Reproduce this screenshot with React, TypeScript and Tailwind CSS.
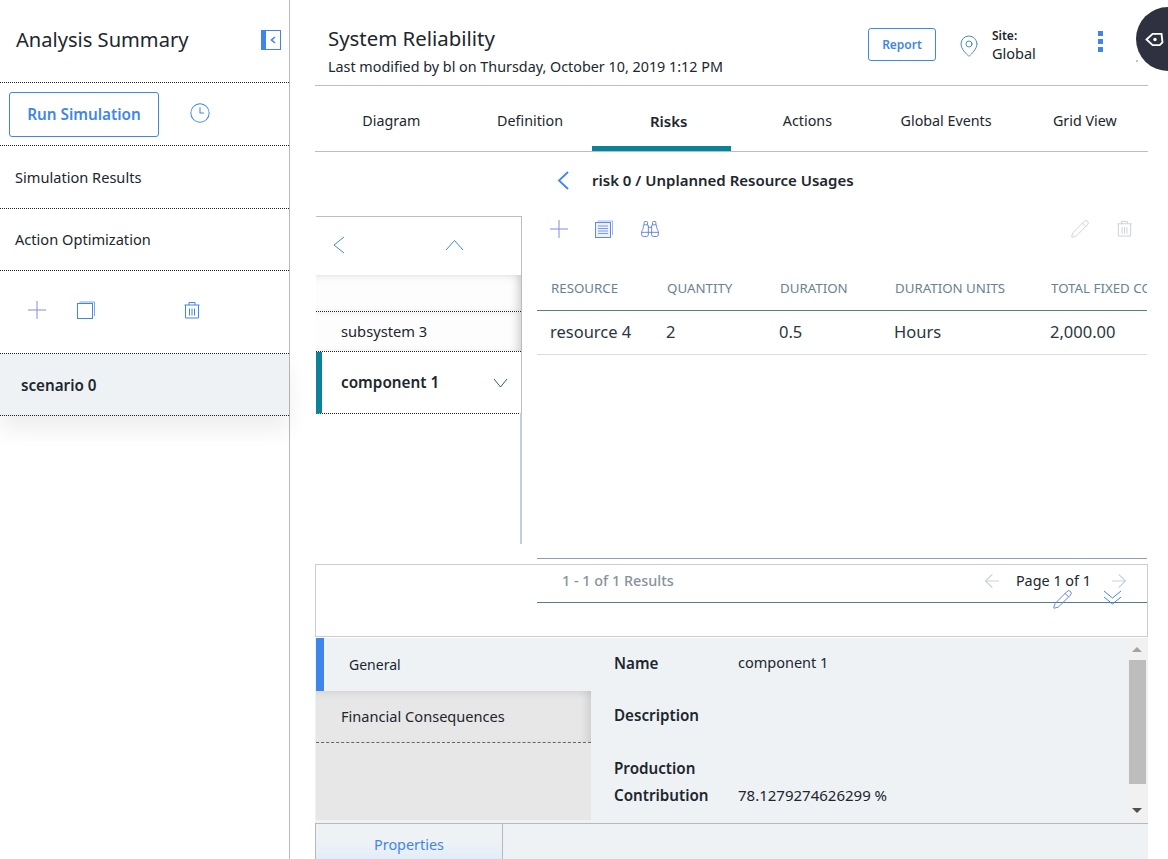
import { ArrowLeft, ArrowRight, Binoculars, Clock3, MapPin, Pencil } from "lucide-react";

const TABS = ["Diagram", "Definition", "Risks", "Actions", "Global Events", "Grid View"];

const COLUMNS = [
    { label: "RESOURCE", value: "resource 4", width: "w-[116px]" },
    { label: "QUANTITY", value: "2", width: "w-[113px]" },
    { label: "DURATION", value: "0.5", width: "w-[115px]" },
    { label: "DURATION UNITS", value: "Hours", width: "w-[156px]" },
    { label: "TOTAL FIXED COST", value: "2,000.00", width: "w-[110px]" },
];

function TrashIcon({ className }: { className?: string }) {
    return (
        <svg viewBox="0 0 18 18" fill="none" stroke="currentColor" strokeWidth="1" className={className}>
            <path d="M1.500 4h15M6 4V1.500h6V4M2.500 4v13h13V4M6.500 7.500v7M9 7.500v7M11.500 7.500v7" />
        </svg>
    );
}

function CopyIcon({ className }: { className?: string }) {
    return (
        <svg viewBox="0 0 18 18" fill="none" stroke="currentColor" strokeWidth="1" className={className}>
            <rect x="0.500" y="2.500" width="15" height="15" />
            <path d="M2.500 1h15v14" opacity="0.7" />
        </svg>
    );
}

function SheetIcon({ className }: { className?: string }) {
    return (
        <svg viewBox="0 0 18 18" fill="none" stroke="currentColor" strokeWidth="1" className={className}>
            <rect x="0.500" y="2.500" width="15" height="15" fill="#eef1fd" />
            <path d="M2.500 1h15v14" opacity="0.6" />
            <path d="M3 6h10M3 8.500h10M3 11h10M3 13.500h10" opacity="0.8" />
        </svg>
    );
}

function PlusIcon({ className }: { className?: string }) {
    return (
        <svg viewBox="0 0 18 18" fill="none" stroke="currentColor" strokeWidth="1" className={className}>
            <path d="M0 9h18M9 0v18" />
        </svg>
    );
}

function ChevronLine({ d, w, h, sw = 1, className }: { d: string; w: number; h: number; sw?: number; className?: string }) {
    return (
        <svg viewBox={`0 0 ${w} ${h}`} width={w} height={h} fill="none" stroke="currentColor" strokeWidth={sw} className={className}>
            <path d={d} />
        </svg>
    );
}

function SideRow({ children, tall }: { children: React.ReactNode; tall?: boolean }) {
    return (
        <div className={`${tall ? "h-[63px]" : "h-[62px]"} flex items-center pl-[15px] pt-[1px] text-[14.600px] border-b border-dotted border-[#222]`}>
            {children}
        </div>
    );
}

export default function App() {
    return (
        <div className="relative w-[1168px] h-[859px] overflow-hidden bg-white flex text-[#20262e] font-['Noto_Sans',sans-serif]">
            {/* Left summary column */}
            <aside className="w-[290px] shrink-0 border-r border-[#b8b8b8]">
                <div className="h-[83px] flex items-center justify-between pl-[16px] pr-[8px] border-b border-dotted border-[#222] pb-[2px]">
                    <h1 className="text-[20.100px] leading-none">Analysis Summary</h1>
                    <div className="w-[20px] h-[20px] mb-[1px] border border-[#3f86ea] border-l-[5px] flex items-center justify-center">
                        <ChevronLine d="M5 1 1.500 4 5 7" w={6} h={8} sw={1.600} className="text-[#3f86ea]" />
                    </div>
                </div>
                <div className="h-[63px] flex items-center pl-[9px] border-b border-dotted border-[#222]">
                    <button className="w-[150px] h-[45px] rounded-[3px] border border-[#3f86ea] text-[#3f86ea] text-[15.300px] font-semibold">
                        Run Simulation
                    </button>
                    <Clock3 className="ml-[30px] mb-[3px] w-[22px] h-[22px] text-[#3f86ea]" strokeWidth={1.100} />
                </div>
                <SideRow tall>Simulation Results</SideRow>
                <SideRow>Action Optimization</SideRow>
                <div className="h-[83px] flex items-center pl-[28px] pb-[4px] border-b border-dotted border-[#222]">
                    <PlusIcon className="w-[18px] h-[18px] text-[#7f8ce8]" />
                    <CopyIcon className="ml-[31px] w-[18px] h-[18px] text-[#3f86ea]" />
                    <TrashIcon className="ml-[88px] w-[18px] h-[18px] text-[#3f86ea]" />
                </div>
                <div className="h-[62px] flex items-center pl-[21px] pt-[1px] bg-[#eff2f5] border-b border-dotted border-[#222] text-[15.200px] font-semibold shadow-[0_14px_22px_rgba(0,0,0,0.07)]">
                    scenario 0
                </div>
            </aside>

            {/* Main column */}
            <main className="w-[833px] ml-[25px] shrink-0 flex flex-col">
                <header className="h-[86px] shrink-0 flex items-start border-b border-[#bdbdbd]">
                    <div className="ml-[13px] mt-[24px] flex-1">
                        <div className="text-[20.400px] leading-[28px]">System Reliability</div>
                        <div className="text-[14.350px] leading-[20px] mt-[5px]">Last modified by bl on Thursday, October 10, 2019 1:12 PM</div>
                    </div>
                    <button className="mt-[28px] w-[68px] h-[33px] rounded-[3px] border border-[#3f86ea] text-[#3f86ea] text-[12px] font-semibold">
                        Report
                    </button>
                    <MapPin className="mt-[33px] ml-[21px] w-[24px] h-[26px] text-[#4a8fb5]" strokeWidth={1} />
                    <div className="mt-[29px] ml-[11px] w-[106px]">
                        <div className="text-[12px] leading-[14px] font-semibold">Site:</div>
                        <div className="text-[14.500px] leading-[20px]">Global</div>
                    </div>
                    <div className="mt-[31px] mr-[45px] flex flex-col gap-[3px]">
                        <span className="w-[5px] h-[5px] bg-[#3f86ea]" />
                        <span className="w-[5px] h-[5px] bg-[#3f86ea]" />
                        <span className="w-[5px] h-[5px] bg-[#3f86ea]" />
                    </div>
                </header>

                <nav className="h-[66px] shrink-0 flex border-b border-[#bdbdbd]">
                    {TABS.map((tab) => (
                        <div
                            key={tab}
                            className={
                                tab === "Risks"
                                    ? "w-[138.700px] shrink-0 flex items-center justify-center text-[15px] font-semibold border-b-[5px] border-[#0a8299] pl-[14px] pt-[10px]"
                                    : "w-[138.700px] shrink-0 flex items-center justify-center text-[14.300px] pl-[14px] pt-[5px]"
                            }
                        >
                            {tab}
                        </div>
                    ))}
                </nav>

                <div className="h-[64px] shrink-0 flex items-center pl-[242px] pb-[7px]">
                    <ChevronLine d="M11 1 2 9.500 11 18" w={12} h={19} sw={1.800} className="text-[#3f86ea]" />
                    <span className="ml-[23px] text-[15px] font-semibold">risk 0 / Unplanned Resource Usages</span>
                </div>

                <div className="h-[343px] shrink-0 flex">
                    {/* Asset tree */}
                    <div className="w-[206px] ml-[1px] shrink-0">
                        <div className="h-[197px] border-t border-r border-[#bdbdbd]">
                            <div className="h-[58px] flex items-center pl-[17px] pb-[2px]">
                                <ChevronLine d="M11 1 1 9 11 17" w={12} h={18} className="text-[#3f86ea]" />
                                <ChevronLine d="M1 11 9.500 1.500 18 11" w={19} h={12} className="ml-[100px] text-[#3f86ea]" />
                            </div>
                            <div className="h-[37px] border-b border-dotted border-[#222] bg-[#fdfdfd] shadow-[inset_-6px_0_8px_-3px_rgba(0,0,0,0.18),inset_0_8px_10px_-6px_rgba(0,0,0,0.05)]" />
                            <div className="h-[40px] flex items-center pl-[25px] text-[14.700px] border-b border-dotted border-[#222] bg-[#fdfdfd] shadow-[inset_-6px_0_8px_-3px_rgba(0,0,0,0.18)]">
                                subsystem 3
                            </div>
                            <div className="h-[62px] flex items-center justify-between pl-[19px] pr-[13px] border-l-[6px] border-[#0a8299] border-b border-b-[#222] [border-bottom-style:dotted] text-[15.300px] font-semibold">
                                component 1
                                <ChevronLine d="M1 1 7.500 9 14 1" w={15} h={10} className="text-[#2f5f7a]" />
                            </div>
                        </div>
                        <div className="ml-auto w-[2px] h-[131px] bg-[#c5ced8]" />
                    </div>

                    {/* Usage table */}
                    <div className="w-[610px] ml-[15px] shrink-0 flex flex-col border-b border-[#8da0ab]">
                        <div className="h-[56px] shrink-0 flex items-center pl-[13px] pr-[14px] pb-[31px]">
                            <PlusIcon className="w-[18px] h-[18px] text-[#7f8ce8]" />
                            <SheetIcon className="ml-[27px] w-[18px] h-[18px] text-[#5b8ae8]" />
                            <Binoculars className="ml-[27px] w-[20px] h-[20px] text-[#5b7fe8]" strokeWidth={1.100} />
                            <Pencil className="ml-auto w-[20px] h-[20px] text-[#c9d1d8]" strokeWidth={1.100} />
                            <TrashIcon className="ml-[26px] w-[17px] h-[17px] text-[#c9d1d8]" />
                        </div>
                        <div className="h-[39px] flex items-center pl-[14px] pb-[5px] border-b border-[#5a7a85] overflow-hidden shrink-0">
                            {COLUMNS.map((col) => (
                                <div key={col.label} className={`${col.width} shrink-0 text-[13.300px] text-[#6b8291] whitespace-nowrap overflow-hidden`}>
                                    {col.label}
                                </div>
                            ))}
                        </div>
                        <div className="h-[44px] flex items-center pl-[13px] border-b border-[#d8dee4] overflow-hidden shrink-0">
                            {COLUMNS.map((col) => (
                                <div key={col.label} className={`${col.width} shrink-0 text-[16.500px] text-[#2b3543]`}>
                                    {col.value}
                                </div>
                            ))}
                        </div>
                    </div>
                </div>

                {/* Pager and detail toolbar */}
                <div className="relative mt-[5px] h-[73px] shrink-0 border border-[#cccccc]">
                    <div className="ml-[221px] h-[38px] flex items-center pl-[25px] pr-[17px] pb-[6px] border-b border-[#5a7a85] text-[14.400px]">
                        <span className="text-[#87929c] font-medium">1 - 1 of 1 Results</span>
                        <ArrowLeft className="ml-auto w-[22px] h-[22px] text-[#c9d1d8]" strokeWidth={1.300} />
                        <span className="ml-[13px]">Page 1 of 1</span>
                        <ArrowRight className="ml-[17px] w-[22px] h-[22px] text-[#c9d1d8]" strokeWidth={1.300} />
                    </div>
                    <Pencil className="absolute left-[736px] top-[24px] w-[21px] h-[21px] text-[#5b7fe8]" strokeWidth={1.100} />
                    <ChevronLine d="M1 1 9.500 8 18 1M1 7 9.500 14 18 7" w={19} h={15} className="absolute left-[787px] top-[25px] text-[#3f86ea]" />
                </div>

                {/* Details */}
                <div className="mt-[1px] h-[186px] shrink-0 flex bg-[#eff2f5] border-b border-[#b8b8b8]">
                    <div className="w-[275px] ml-[1px] h-[182px] shrink-0 flex flex-col bg-[#e8e7e7]">
                        <div className="h-[53px] flex items-center pl-[25px] bg-[#eff2f5] border-l-[8px] border-[#3f86ea] text-[14px]">General</div>
                        <div className="h-[52px] flex items-center pl-[25px] text-[14.600px] border-b border-dashed border-[#666] shadow-[inset_-8px_0_10px_-5px_rgba(0,0,0,0.12),inset_0_8px_8px_-6px_rgba(0,0,0,0.08)]">
                            Financial Consequences
                        </div>
                    </div>
                    <div className="flex-1 pl-[23px] text-[15.200px]">
                        <div className="flex items-center h-[50px]">
                            <span className="w-[124px] font-semibold">Name</span>
                            <span className="text-[14.500px]">component 1</span>
                        </div>
                        <div className="h-[53px] flex items-center pt-[1px]">
                            <span className="font-semibold">Description</span>
                        </div>
                        <div className="h-[41px] flex items-center pt-[14px] font-semibold">Production</div>
                        <div className="flex items-center h-[27px]">
                            <span className="w-[124px] font-semibold">Contribution</span>
                            <span className="text-[15px]">78.1279274626299 %</span>
                        </div>
                    </div>
                    <div className="w-[20px] mr-[1px] shrink-0 bg-[#f1f1f1] flex flex-col items-center">
                        <div className="h-[22px] flex items-center justify-center">
                            <span className="w-0 h-0 border-x-[5px] border-x-transparent border-b-[5px] border-b-[#a3a3a3]" />
                        </div>
                        <div className="w-[17px] h-[124px] bg-[#bdbdbd]" />
                        <div className="flex-1 flex items-center justify-center pt-[14px]">
                            <span className="w-0 h-0 border-x-[5px] border-x-transparent border-t-[5px] border-t-[#505050]" />
                        </div>
                    </div>
                </div>

                <div className="flex-1 bg-[#eff2f5]">
                    <div className="w-[188px] h-full flex items-center justify-center pt-[6px] border-x border-[#b8b8b8] text-[14.400px] text-[#3f86ea] bg-gradient-to-b from-[#eff2f5] via-[#eff2f5] to-[#e2ecf8]">
                        Properties
                    </div>
                </div>
            </main>

            {/* Floating launcher */}
            <div className="absolute left-[1136px] top-[7px] w-[64px] h-[64px] rounded-full bg-[#2f3140] flex items-center pl-[9px]">
                <svg viewBox="0 0 20 16" className="w-[19px] h-[15px]" fill="none" stroke="#fff" strokeWidth="2">
                    <path d="M1.500 8 8 2h9.500l1 9-3 3H8z" />
                    <circle cx="10.500" cy="8" r="1.800" fill="#fff" stroke="none" />
                </svg>
            </div>
            <span className="absolute left-[1136px] top-[60px] w-[2px] h-[2px] bg-[#c4c4c4]" />
        </div>
    );
}
